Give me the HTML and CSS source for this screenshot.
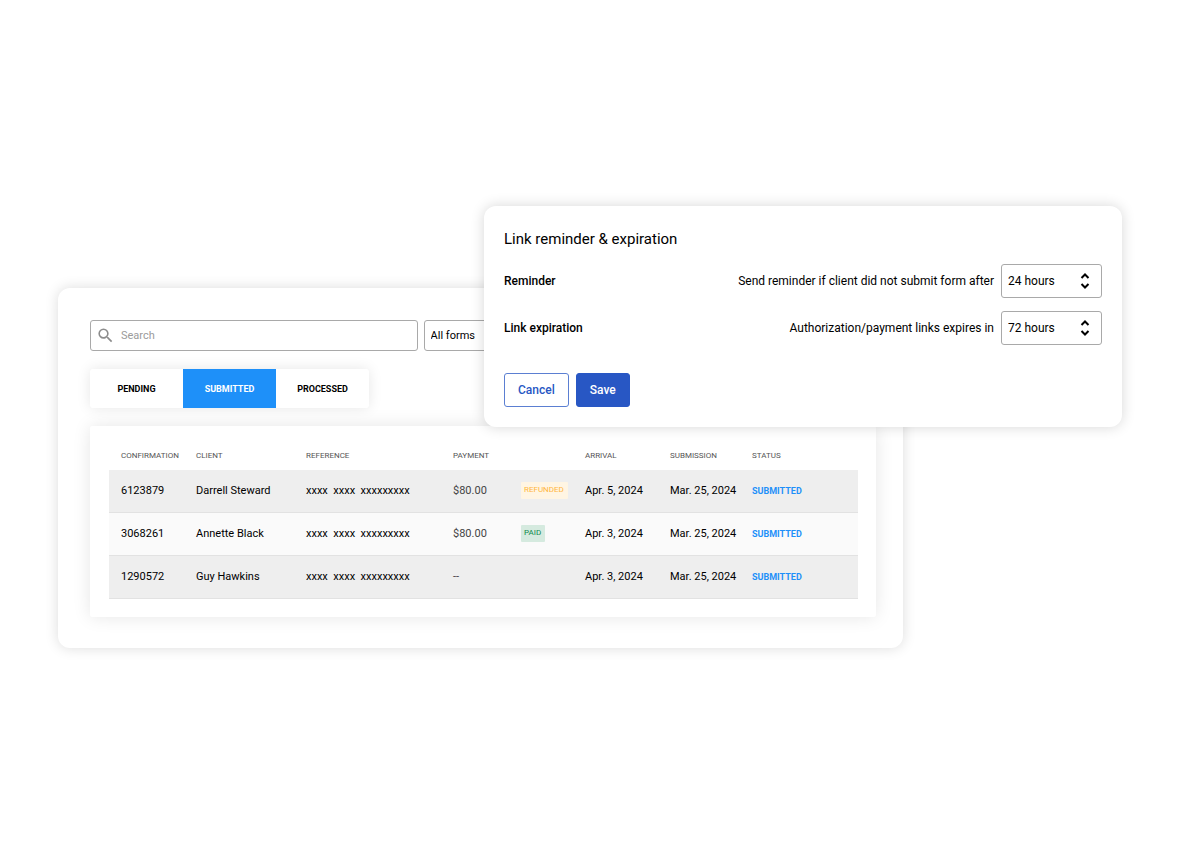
FILE: index.html
```html
<!DOCTYPE html>
<html lang="en">
<head>
  <meta charset="utf-8" />
  <meta name="viewport" content="width=device-width, initial-scale=1.0" />
  <title>Authorization forms</title>

  <link rel="stylesheet" href="styles.css">
</head>
<body>

  <main class="stage">
    <section class="panel">
      <div class="filters">
        <label class="search">
          <svg class="search-icon" viewBox="0 0 24 24" aria-hidden="true"><path d="M15.5 14h-.79l-.28-.27A6.471 6.471 0 0 0 16 9.5 6.5 6.5 0 1 0 9.5 16c1.61 0 3.09-.59 4.23-1.57l.27.28v.79l5 4.99L20.49 19l-4.99-5zm-6 0C7.01 14 5 11.99 5 9.5S7.01 5 9.5 5 14 7.01 14 9.5 11.99 14 9.5 14z"/></svg>
          <input type="search" placeholder="Search" aria-label="Search" />
        </label>
        <select class="forms-select" aria-label="Form type">
          <option>All forms</option>
        </select>
      </div>

      <div class="tabs">
        <button class="tab">PENDING</button>
        <button class="tab active">SUBMITTED</button>
        <button class="tab">PROCESSED</button>
      </div>

      <div class="table-card">
        <table>
          <thead>
            <tr>
              <th class="col-confirmation">CONFIRMATION</th>
              <th class="col-client">CLIENT</th>
              <th class="col-reference">REFERENCE</th>
              <th class="col-payment">PAYMENT</th>
              <th class="col-badge"></th>
              <th class="col-arrival">ARRIVAL</th>
              <th class="col-submission">SUBMISSION</th>
              <th>STATUS</th>
            </tr>
          </thead>
          <tbody>
            <tr>
              <td>6123879</td>
              <td>Darrell Steward</td>
              <td>xxxx&nbsp; xxxx&nbsp; xxxxxxxxx</td>
              <td class="amount">$80.00</td>
              <td><span class="badge refunded">REFUNDED</span></td>
              <td>Apr. 5, 2024</td>
              <td>Mar. 25, 2024</td>
              <td class="status">SUBMITTED</td>
            </tr>
            <tr>
              <td>3068261</td>
              <td>Annette Black</td>
              <td>xxxx&nbsp; xxxx&nbsp; xxxxxxxxx</td>
              <td class="amount">$80.00</td>
              <td><span class="badge paid">PAID</span></td>
              <td>Apr. 3, 2024</td>
              <td>Mar. 25, 2024</td>
              <td class="status">SUBMITTED</td>
            </tr>
            <tr>
              <td>1290572</td>
              <td>Guy Hawkins</td>
              <td>xxxx&nbsp; xxxx&nbsp; xxxxxxxxx</td>
              <td class="amount">--</td>
              <td></td>
              <td>Apr. 3, 2024</td>
              <td>Mar. 25, 2024</td>
              <td class="status">SUBMITTED</td>
            </tr>
          </tbody>
        </table>
      </div>
    </section>

    <section class="dialog" role="dialog" aria-labelledby="dialogTitle">
      <h2 id="dialogTitle">Link reminder &amp; expiration</h2>

      <div class="setting">
        <strong>Reminder</strong>
        <label for="reminder">Send reminder if client did not submit form after</label>
        <div class="hours">
          <select id="reminder"><option>24 hours</option></select>
          <svg class="arrows" viewBox="0 0 10 16" aria-hidden="true"><path d="M1.500 5 5 1.500 8.500 5M1.500 11 5 14.500 8.500 11"/></svg>
        </div>
      </div>

      <div class="setting">
        <strong>Link expiration</strong>
        <label for="expiration">Authorization/payment links expires in</label>
        <div class="hours">
          <select id="expiration"><option>72 hours</option></select>
          <svg class="arrows" viewBox="0 0 10 16" aria-hidden="true"><path d="M1.500 5 5 1.500 8.500 5M1.500 11 5 14.500 8.500 11"/></svg>
        </div>
      </div>

      <div class="actions">
        <button class="cancel">Cancel</button>
        <button class="save">Save</button>
      </div>
    </section>
  </main>

</body>
</html>
```
FILE: styles.css
```css
* {
  box-sizing: border-box;
}

body {
  margin: 0;
  font-family: Roboto, Arial, sans-serif;
  font-size: 11px;
  background: #fff;
  color: #000;
}

button, input, select {
  font-family: inherit;
  color: inherit;
}

.stage {
  position: relative;
  padding: 288px 277px 100px 58px;
}

.panel {
  padding: 32px 27px 31px 32px;
  border-radius: 12px;
  background: #fff;
  box-shadow: 0 0 14px rgba(0, 0, 0, 0.14);
}

/* search + form filter */
.filters {
  display: grid;
  grid-template-columns: 42fr 58fr;
  gap: 6px;
}

.search {
  display: flex;
  align-items: center;
  gap: 6px;
  height: 31px;
  padding: 0 5px 1px;
  border: 1px solid #a9a9a9;
  border-radius: 3px;
}

.search-icon {
  width: 19px;
  height: 19px;
  fill: #8c8c8c;
}

.search input {
  flex: 1;
  min-width: 0;
  padding: 0;
  border: none;
  outline: none;
  background: none;
  font-size: 11px;
}

.search input::placeholder {
  color: #9b9b9b;
}

.forms-select {
  appearance: none;
  height: 31px;
  padding: 0 6px 1px;
  border: 1px solid #a9a9a9;
  border-radius: 3px;
  background: #fff;
  font-size: 11px;
}

/* tabs */
.tabs {
  display: inline-flex;
  margin-top: 18px;
  border-radius: 3px;
  background: #fff;
  box-shadow: 0 0 14px rgba(0, 0, 0, 0.1);
}

.tab {
  width: 93px;
  height: 39px;
  padding: 0;
  border: none;
  background: none;
  font-size: 9px;
  font-weight: 700;
}

.tab.active {
  background: #1e90f9;
  color: #fff;
}

/* table */
.table-card {
  margin-top: 18px;
  padding: 15px 18px 18px 19px;
  border-radius: 2px;
  background: #fff;
  box-shadow: 0 0 18px rgba(0, 0, 0, 0.1);
}

table {
  width: 100%;
  table-layout: fixed;
  border-spacing: 0;
}

th {
  height: 29px;
  padding: 0 0 0 12px;
  color: #555;
  font-size: 8px;
  font-weight: 400;
  text-align: left;
}

td {
  height: 43px;
  padding: 0 0 1px 12px;
  border-bottom: 1px solid #e2e2e2;
  white-space: nowrap;
}

tbody tr {
  background: #fafafa;
}

tbody tr:nth-child(odd) {
  background: #eee;
}

.col-confirmation { width: 75px; }
.col-client { width: 110px; }
.col-reference { width: 147px; }
.col-payment { width: 68px; }
.col-badge { width: 64px; }
.col-arrival { width: 85px; }
.col-submission { width: 82px; }

.amount {
  color: #444;
}

.badge {
  display: inline-block;
  padding: 3px 4px 5px 3px;
  border-radius: 1px;
  font-size: 8px;
  font-weight: 400;
  line-height: 9px;
  vertical-align: middle;
}

.badge.refunded {
  background: #fff5e3;
  color: #ffb640;
}

.badge.paid {
  background: #d5eadf;
  color: #108a4e;
}

.status {
  color: #1e90f9;
  font-size: 9px;
  font-weight: 700;
}

/* reminder dialog */
.dialog {
  position: absolute;
  top: 206px;
  right: 58px;
  left: 484px;
  padding: 24px 20px 20px;
  border-radius: 12px;
  background: #fff;
  box-shadow: 0 0 14px rgba(0, 0, 0, 0.16);
  font-size: 12px;
}

.dialog h2 {
  margin: 0 0 16px;
  font-size: 15px;
  font-weight: 400;
  line-height: 18px;
}

.setting {
  display: flex;
  align-items: center;
  gap: 7px;
  margin-bottom: 13px;
}

.setting strong {
  flex: 1;
  font-weight: 500;
}

.hours {
  position: relative;
}

.hours select {
  appearance: none;
  display: block;
  width: 101px;
  height: 34px;
  padding: 0 6px;
  border: 1px solid #a9a9a9;
  border-radius: 3px;
  background: #fff;
  font-size: 12px;
}

.arrows {
  position: absolute;
  top: 9px;
  right: 12px;
  width: 10px;
  height: 16px;
  fill: none;
  stroke: #000;
  stroke-width: 2;
  pointer-events: none;
}

.actions {
  display: flex;
  gap: 7px;
  margin-top: 28px;
}

.actions button {
  height: 34px;
  padding: 0 13px;
  border: 1px solid #2857c4;
  border-radius: 3px;
  font-size: 12px;
  font-weight: 500;
}

.actions .cancel {
  border-color: #5b7fd2;
  background: #fff;
  color: #2857c4;
}

.save {
  background: #2857c4;
  color: #fff;
}
```
